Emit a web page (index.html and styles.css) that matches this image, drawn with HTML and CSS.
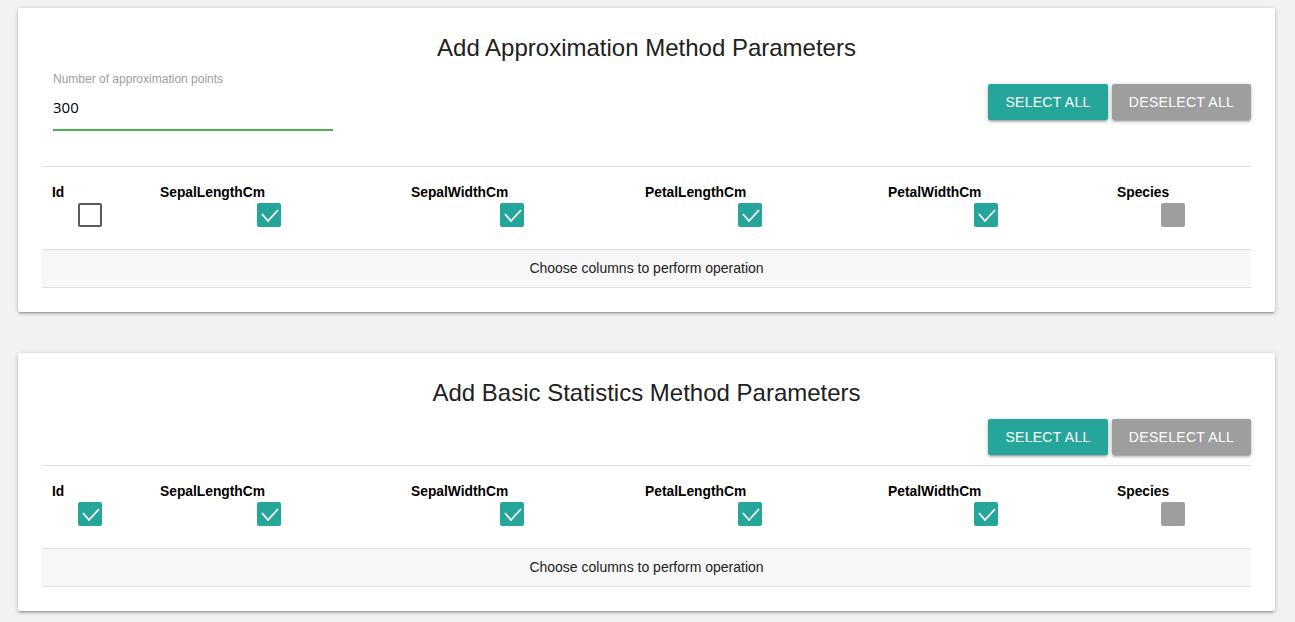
FILE: index.html
```html
<!DOCTYPE html>
<html>
<head>
<meta charset="utf-8">
<link rel="stylesheet" href="styles.css">
</head>
<body>
<div class="page">
  <section class="card">
    <h2 class="card-title">Add Approximation Method Parameters</h2>
    <div class="toolbar toolbar--input">
      <div class="field">
        <label class="field-label">Number of approximation points</label>
        <div class="field-input">300</div>
      </div>
      <div class="btns">
        <button class="btn btn--select">SELECT ALL</button>
        <button class="btn btn--deselect">DESELECT ALL</button>
      </div>
    </div>
    <div class="cols">
      <div class="col"><div class="col-name">Id</div><div class="col-check"><span class="cb cb--off"></span></div></div>
      <div class="col"><div class="col-name">SepalLengthCm</div><div class="col-check"><span class="cb cb--on"><svg viewBox="0 0 24 24"><polyline points="5,11 11,18 21,7"/></svg></span></div></div>
      <div class="col"><div class="col-name">SepalWidthCm</div><div class="col-check"><span class="cb cb--on"><svg viewBox="0 0 24 24"><polyline points="5,11 11,18 21,7"/></svg></span></div></div>
      <div class="col"><div class="col-name">PetalLengthCm</div><div class="col-check"><span class="cb cb--on"><svg viewBox="0 0 24 24"><polyline points="5,11 11,18 21,7"/></svg></span></div></div>
      <div class="col"><div class="col-name">PetalWidthCm</div><div class="col-check"><span class="cb cb--on"><svg viewBox="0 0 24 24"><polyline points="5,11 11,18 21,7"/></svg></span></div></div>
      <div class="col"><div class="col-name">Species</div><div class="col-check"><span class="cb cb--disabled"></span></div></div>
    </div>
    <div class="cols-footer">Choose columns to perform operation</div>
  </section>

  <section class="card">
    <h2 class="card-title">Add Basic Statistics Method Parameters</h2>
    <div class="toolbar toolbar--plain">
      <div class="btns">
        <button class="btn btn--select">SELECT ALL</button>
        <button class="btn btn--deselect">DESELECT ALL</button>
      </div>
    </div>
    <div class="cols">
      <div class="col"><div class="col-name">Id</div><div class="col-check"><span class="cb cb--on"><svg viewBox="0 0 24 24"><polyline points="5,11 11,18 21,7"/></svg></span></div></div>
      <div class="col"><div class="col-name">SepalLengthCm</div><div class="col-check"><span class="cb cb--on"><svg viewBox="0 0 24 24"><polyline points="5,11 11,18 21,7"/></svg></span></div></div>
      <div class="col"><div class="col-name">SepalWidthCm</div><div class="col-check"><span class="cb cb--on"><svg viewBox="0 0 24 24"><polyline points="5,11 11,18 21,7"/></svg></span></div></div>
      <div class="col"><div class="col-name">PetalLengthCm</div><div class="col-check"><span class="cb cb--on"><svg viewBox="0 0 24 24"><polyline points="5,11 11,18 21,7"/></svg></span></div></div>
      <div class="col"><div class="col-name">PetalWidthCm</div><div class="col-check"><span class="cb cb--on"><svg viewBox="0 0 24 24"><polyline points="5,11 11,18 21,7"/></svg></span></div></div>
      <div class="col"><div class="col-name">Species</div><div class="col-check"><span class="cb cb--disabled"></span></div></div>
    </div>
    <div class="cols-footer">Choose columns to perform operation</div>
  </section>
</div>
</body>
</html>
```
FILE: styles.css
```css
* { box-sizing: border-box; }
html, body {
  margin: 0;
  padding: 0;
  background: #f2f2f2;
  font-family: "Liberation Sans", Arial, sans-serif;
  color: rgba(0, 0, 0, 0.87);
}
.page {
  padding: 8px 20px 0 18px;
}
.card {
  background: #fff;
  border-radius: 2px;
  box-shadow: 0 2px 2px 0 rgba(0,0,0,.14), 0 3px 1px -2px rgba(0,0,0,.12), 0 1px 5px 0 rgba(0,0,0,.2);
  padding: 25px 24px 24px 24px;
  margin-bottom: 41px;
}
.card-title {
  margin: 0 0 7px 0;
  font-size: 24px;
  line-height: 30px;
  font-weight: normal;
  text-align: center;
  color: #212121;
}
.toolbar {
  display: flex;
  align-items: flex-start;
  margin-bottom: 10px;
}
.toolbar--input { justify-content: space-between; }
.toolbar--plain { justify-content: flex-end; }
.toolbar--plain .btns { margin-top: 4px; }
.toolbar--input .btns { margin-top: 14px; }

.field {
  margin-left: 11px;
  width: 280px;
  margin-bottom: 25px;
}
.field-label {
  display: block;
  padding-top: 1px;
  font-size: 12px;
  line-height: 16px;
  color: #9e9e9e;
}
.field-input {
  height: 44px;
  line-height: 40px;
  font-family: "Open Sans", sans-serif;
  font-size: 15px;
  color: #000;
  border-bottom: 2px solid #4caf50;
}
.btns {
  display: flex;
  gap: 4px;
}
.btn {
  height: 36px;
  border: none;
  border-radius: 2px;
  color: #fff;
  font-family: "Liberation Sans", Arial, sans-serif;
  font-size: 14px;
  letter-spacing: 0.3px;
  padding: 0;
  text-align: center;
  box-shadow: 0 2px 2px 0 rgba(0,0,0,.14), 0 3px 1px -2px rgba(0,0,0,.12), 0 1px 5px 0 rgba(0,0,0,.2);
}
.btn--select { background: #26a69a; width: 120px; }
.btn--deselect { background: #9e9e9e; width: 139px; }

.cols {
  display: grid;
  grid-template-columns: 108px 251px 234px 243px 229px 144px;
  border-top: 1px solid #e0e0e0;
}
.col {
  padding: 18px 10px 22px 10px;
}
.col-name {
  font-weight: bold;
  font-size: 13.8px;
  line-height: 16px;
  color: #000;
}
.col-check {
  margin-top: 2px;
  height: 24px;
  text-align: center;
}
.cb {
  display: inline-block;
  width: 24px;
  height: 24px;
  margin-right: 13px;
  border-radius: 2px;
  vertical-align: top;
}
.cb svg {
  display: block;
  width: 24px;
  height: 24px;
  fill: none;
  stroke: #fff;
  stroke-width: 1.8;
}
.cb--off { border: 2px solid #5a5a5a; }
.cb--on { background: #26a69a; }
.cb--disabled { background: #9e9e9e; }

.cols-footer {
  border-top: 1px solid #e0e0e0;
  border-bottom: 1px solid #e0e0e0;
  background: #f7f7f7;
  height: 39px;
  line-height: 37px;
  text-align: center;
  font-size: 14px;
  color: #222;
}
```
